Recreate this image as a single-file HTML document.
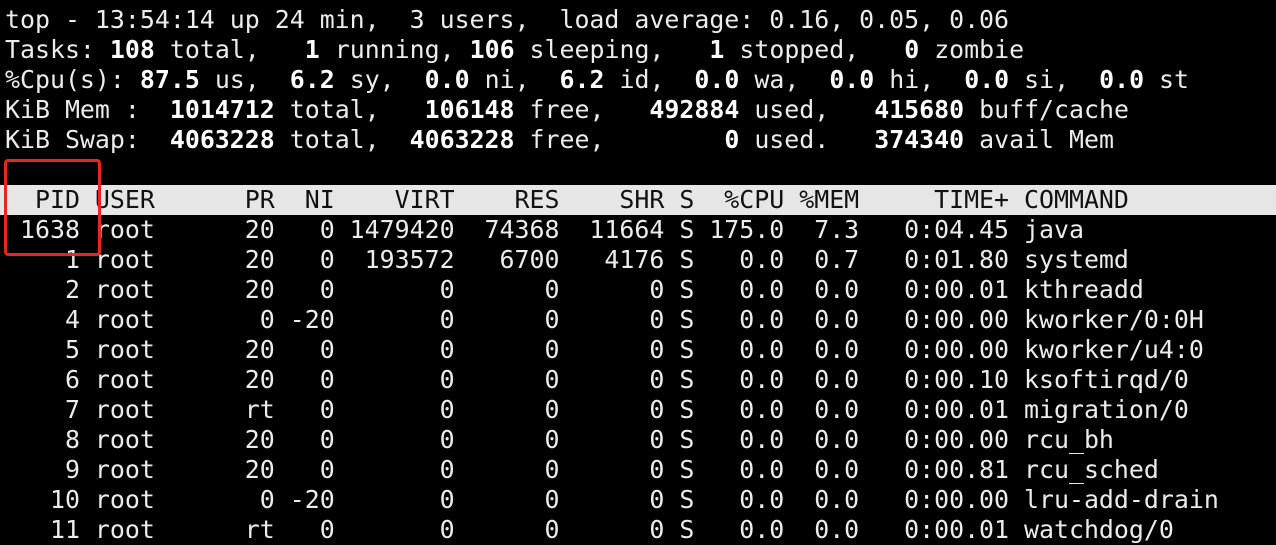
<!DOCTYPE html>
<html><head><style>
html,body{margin:0;padding:0;background:#000;width:1276px;height:525px;overflow:hidden}
pre{margin:0;position:absolute;left:5px;top:5px;font-family:"DejaVu Sans Mono","Liberation Mono",monospace;font-size:24.9px;line-height:30px;color:#ececec;white-space:pre}
b{font-weight:bold;color:#fff}
.hdr{position:absolute;left:0;top:185px;width:1276px;height:30px;background:#e6e6e6}
.hdrtxt{color:#111}
.box{position:absolute;left:4px;top:159px;width:91px;height:91px;border:3px solid #e8261f;border-radius:4px}
</style></head><body>
<div class="hdr"></div>
<pre>top - 13:54:14 up 24 min,  3 users,  load average: 0.16, 0.05, 0.06
Tasks: <b>108</b> total,   <b>1</b> running, <b>106</b> sleeping,   <b>1</b> stopped,   <b>0</b> zombie
%Cpu(s): <b>87.5</b> us,  <b>6.2</b> sy,  <b>0.0</b> ni,  <b>6.2</b> id,  <b>0.0</b> wa,  <b>0.0</b> hi,  <b>0.0</b> si,  <b>0.0</b> st
KiB Mem :  <b>1014712</b> total,   <b>106148</b> free,   <b>492884</b> used,   <b>415680</b> buff/cache
KiB Swap:  <b>4063228</b> total,  <b>4063228</b> free,        <b>0</b> used.   <b>374340</b> avail Mem

<span class="hdrtxt">  PID USER      PR  NI    VIRT    RES    SHR S  %CPU %MEM     TIME+ COMMAND</span>
 1638 root      20   0 1479420  74368  11664 S 175.0  7.3   0:04.45 java
    1 root      20   0  193572   6700   4176 S   0.0  0.7   0:01.80 systemd
    2 root      20   0       0      0      0 S   0.0  0.0   0:00.01 kthreadd
    4 root       0 -20       0      0      0 S   0.0  0.0   0:00.00 kworker/0:0H
    5 root      20   0       0      0      0 S   0.0  0.0   0:00.00 kworker/u4:0
    6 root      20   0       0      0      0 S   0.0  0.0   0:00.10 ksoftirqd/0
    7 root      rt   0       0      0      0 S   0.0  0.0   0:00.01 migration/0
    8 root      20   0       0      0      0 S   0.0  0.0   0:00.00 rcu_bh
    9 root      20   0       0      0      0 S   0.0  0.0   0:00.81 rcu_sched
   10 root       0 -20       0      0      0 S   0.0  0.0   0:00.00 lru-add-drain
   11 root      rt   0       0      0      0 S   0.0  0.0   0:00.01 watchdog/0</pre>
<div class="box"></div>
</body></html>
